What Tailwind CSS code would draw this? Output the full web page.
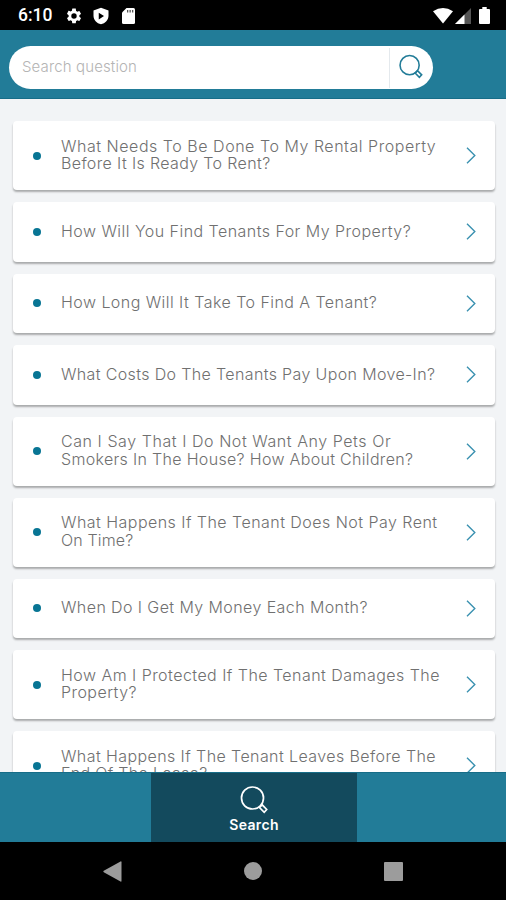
<!DOCTYPE html>
<html lang="en">
<head>
    <meta charset="UTF-8">
    <meta name="viewport" content="width=device-width, initial-scale=1.0">
    <title>Search questions</title>
    <script src="https://cdn.jsdelivr.net/npm/@tailwindcss/browser@4"></script>
</head>
<body class="bg-black font-['Inter',sans-serif]">
    <div class="w-[506px] h-[900px] flex flex-col overflow-hidden">
        <!-- Status bar -->
        <div class="h-[30px] shrink-0 bg-black flex items-center pl-[18px] pr-[16px] pt-px text-white">
            <span class="w-[48px] font-['Roboto',sans-serif] font-medium text-[17.5px] leading-none">6:10</span>
            <svg class="w-[18px] h-[18px] -ml-px" viewBox="0 0 24 24" fill="currentColor"><path d="M19.14 12.94a7 7 0 0 0 0-1.88l2.03-1.58a.5.5 0 0 0 .12-.61l-1.92-3.32a.5.5 0 0 0-.59-.22l-2.39.96a7 7 0 0 0-1.62-.94l-.36-2.54A.5.5 0 0 0 13.93 2h-3.84a.5.5 0 0 0-.48.41l-.36 2.54a7 7 0 0 0-1.62.94l-2.39-.96a.5.5 0 0 0-.59.22L2.74 8.87a.5.5 0 0 0 .12.61l2.03 1.58a7 7 0 0 0 0 1.88l-2.03 1.58a.5.5 0 0 0-.12.61l1.92 3.32c.12.22.37.29.59.22l2.39-.96c.5.38 1.03.7 1.62.94l.36 2.54c.05.24.24.41.48.41h3.84c.24 0 .44-.17.47-.41l.36-2.54a7 7 0 0 0 1.62-.94l2.39.96c.22.08.47 0 .59-.22l1.92-3.32a.5.5 0 0 0-.12-.61zM12 15.6a3.6 3.6 0 1 1 0-7.2 3.6 3.6 0 0 1 0 7.2z"/></svg>
            <svg class="w-[18px] h-[18px] ml-[9px]" viewBox="0 0 24 24" fill="currentColor" fill-rule="evenodd"><path d="M12 1L2 4.5v7C2 17 6.3 21.600 12 23c5.700-1.400 10-6 10-11.500v-7zM9 7.500l7 4.500-7 4.500z"/></svg>
            <svg class="w-[13px] h-[16px] ml-[12px]" viewBox="0 0 13 16"><path d="M4.500 0h7A1.500 1.500 0 0 1 13 1.500v13a1.500 1.500 0 0 1-1.500 1.500h-10A1.500 1.500 0 0 1 0 14.500V4.500z" fill="#fff"/><path d="M5 2v2.500h1.300V2zM7.500 2v2.500h1.300V2zM10 2v2.500h1.300V2z" fill="#555"/></svg>
            <svg class="w-[20px] h-[16px] ml-auto" viewBox="0 0 20 16" fill="currentColor"><path d="M0 3.200Q10-3.200 20 3.200L10 15.500z"/></svg>
            <svg class="w-[16px] h-[16px] ml-[2px]" viewBox="0 0 16 16"><path d="M0 16L16 0v16z" fill="#555"/><path d="M0 16L9.500 6.500V16z" fill="#fff"/></svg>
            <svg class="w-[11px] h-[17px] ml-[8px]" viewBox="0 0 11 17" fill="currentColor"><path d="M3.300 0h4.400v2H10a1 1 0 0 1 1 1v13a1 1 0 0 1-1 1H1a1 1 0 0 1-1-1V3a1 1 0 0 1 1-1h2.300z"/></svg>
        </div>

        <!-- Search bar -->
        <header class="h-[69px] shrink-0 bg-[#227c98] border-b border-[#176d88] pt-4 pl-[9px]">
            <div class="w-[424px] h-[43px] rounded-full bg-white flex items-center overflow-hidden">
                <span class="flex-1 pl-[13px] font-light text-[15px] tracking-[0.13px] text-[#b4b4b4] whitespace-nowrap">Search question</span>
                <div class="w-[44px] h-[40px] border-l border-[#e4e9ed] flex items-center pl-[8px] pb-px">
                    <svg class="w-[26px] h-[26px]" viewBox="0 0 28 28" fill="none" stroke="#227c98" stroke-width="1.700"><circle cx="12.500" cy="12" r="10.300"/><path d="M18.500 20.500l2.500-2.500 4.500 4.500-2.500 2.700z"/></svg>
                </div>
            </div>
        </header>

        <!-- Questions, filled by the script below -->
        <main id="questions" class="flex-1 min-h-0 overflow-hidden bg-[#f2f4f6] pt-[22px] pl-[13px] pr-[11px] flex flex-col gap-[12px]"></main>

        <!-- Tab bar -->
        <nav class="h-[70px] shrink-0 bg-[#227c98] border-t border-[#176d88] flex pl-[151px]">
            <a class="w-[206px] bg-[#134a5d] flex flex-col items-center text-white pt-[13px]">
                <svg class="w-[28px] h-[28px]" viewBox="0 0 28 28" fill="none" stroke="currentColor" stroke-width="1.700"><circle cx="12.500" cy="12" r="11"/><path d="M19.500 21.500l2.700-2.700 4.500 4.700-2.500 2.800z"/></svg>
                <span class="font-semibold text-[14px] leading-[18px] mt-[2px] tracking-[0.35px]">Search</span>
            </a>
        </nav>

        <!-- Android buttons -->
        <div class="h-[58px] shrink-0 bg-black flex items-center pl-[103px]">
            <svg class="w-[19px] h-[21px]" viewBox="0 0 19 21" fill="#9c9c9c"><path d="M17.500.5Q18.500 0 18.500 1.200v18.600q0 1.200-1 .7L.8 11.200q-1-.7 0-1.400z"/></svg>
            <span class="w-[18px] h-[18px] rounded-full bg-[#9c9c9c] ml-[122px]"></span>
            <span class="w-[19px] h-[19px] rounded-[1px] bg-[#9c9c9c] ml-[122px]"></span>
        </div>
    </div>

    <template id="card">
        <div class="shrink-0 bg-white rounded-[4px] shadow-[0_2px_2px_rgba(0,0,0,0.3)] flex items-center">
            <span class="w-[8px] h-[8px] rounded-full bg-[#087594] ml-[20px] shrink-0"></span>
            <p class="w-[390px] ml-[20px] pb-px font-light text-[16px] leading-[17.5px] text-[#707070] whitespace-nowrap"></p>
            <svg class="w-[10px] h-[17px] ml-auto mr-[19px] shrink-0" viewBox="0 0 10 17" fill="none" stroke="#3a91b0" stroke-width="1.400"><path d="M1 .8l7.800 7.700L1 16.200"/></svg>
        </div>
    </template>

    <script>
        // each line of a question with its letter spacing in px
        const questions = [
            [['What Needs To Be Done To My Rental Property', 0.53], ['Before It Is Ready To Rent?', 0.36]],
            [['How Will You Find Tenants For My Property?', 0.46]],
            [['How Long Will It Take To Find A Tenant?', 0.45]],
            [['What Costs Do The Tenants Pay Upon Move-In?', 0.36]],
            [['Can I Say That I Do Not Want Any Pets Or', 0.56], ['Smokers In The House? How About Children?', 0.32]],
            [['What Happens If The Tenant Does Not Pay Rent', 0.46], ['On Time?', 0.15]],
            [['When Do I Get My Money Each Month?', 0.41]],
            [['How Am I Protected If The Tenant Damages The', 0.46], ['Property?', 0.45]],
            [['What Happens If The Tenant Leaves Before The', 0.41], ['End Of The Lease?', 0.3]],
        ];

        const list = document.getElementById('questions');
        questions.forEach(lines => {
            const card = document.getElementById('card').content.firstElementChild.cloneNode(true);
            card.classList.add(lines.length > 1 ? 'h-[69px]' : 'h-[59.5px]');
            lines.forEach(([text, spacing]) => {
                const row = document.createElement('span');
                row.className = 'block';
                row.textContent = text;
                row.style.letterSpacing = spacing + 'px';
                card.querySelector('p').appendChild(row);
            });
            list.appendChild(card);
        });
    </script>
</body>
</html>
